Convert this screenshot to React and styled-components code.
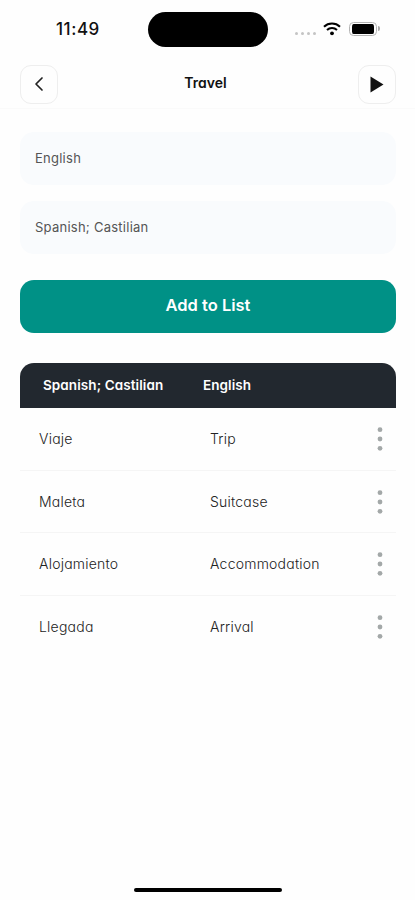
import React from "react";
import styled, { createGlobalStyle } from "styled-components";

const words = [
  { id: 1, source: "Viaje", target: "Trip" },
  { id: 2, source: "Maleta", target: "Suitcase" },
  { id: 3, source: "Alojamiento", target: "Accommodation" },
  { id: 4, source: "Llegada", target: "Arrival" },
];

const App = () => {
  return (
    <>
      <GlobalStyle />
      <Screen>
        <StatusBar>
          <Clock>11:49</Clock>
          <Island />
          <StatusIcons>
            <SignalDots>
              <i />
              <i />
              <i />
              <i />
            </SignalDots>
            <svg width="18" height="14" viewBox="0 0 18 14" fill="none" stroke="#000">
              <path d="M1 4.7C5.5 0.5 12.5 0.5 17 4.7" strokeWidth="2.1" />
              <path d="M4 8C6.8 5.3 11.2 5.3 14 8" strokeWidth="2" />
              <circle cx="9" cy="11.3" r="1.9" fill="#000" stroke="none" />
            </svg>
            <Battery>
              <BatteryBody />
              <BatteryCap />
            </Battery>
          </StatusIcons>
        </StatusBar>

        <Header>
          <IconButton aria-label="Back">
            <svg width="10" height="16" viewBox="0 0 10 16" fill="none">
              <path
                d="M8 2L2 8L8 14"
                stroke="#222"
                strokeWidth="1.7"
                strokeLinecap="round"
                strokeLinejoin="round"
              />
            </svg>
          </IconButton>
          <Title>Travel</Title>
          <IconButton aria-label="Play">
            <svg width="14" height="17" viewBox="0 0 14 17">
              <path d="M0.5 0.5L13.5 8.5L0.5 16.5Z" fill="#111" />
            </svg>
          </IconButton>
        </Header>

        <Form>
          <Field>English</Field>
          <Field>Spanish; Castilian</Field>
          <AddButton>Add to List</AddButton>
        </Form>

        <Table>
          <TableHead>
            <span>Spanish; Castilian</span>
            <span>English</span>
          </TableHead>
          {words.map((word) => (
            <Row key={word.id}>
              <Word>{word.source}</Word>
              <Word>{word.target}</Word>
              <MoreButton aria-label="More">
                <svg width="6" height="24" viewBox="0 0 6 24" fill="#a3a8a8">
                  <circle cx="3" cy="2.7" r="2.4" />
                  <circle cx="3" cy="12" r="2.4" />
                  <circle cx="3" cy="21.3" r="2.4" />
                </svg>
              </MoreButton>
            </Row>
          ))}
        </Table>

        <HomeIndicator />
      </Screen>
    </>
  );
};

export default App;

const GlobalStyle = createGlobalStyle`
  * {
    box-sizing: border-box;
  }
  body {
    margin: 0;
    background: #fefefe;
    font-family: "Inter", "Liberation Sans", sans-serif;
    font-feature-settings: "cv11";
  }
  button {
    font: inherit;
    font-feature-settings: inherit;
    padding: 0;
    border: none;
    background: none;
  }
`;

const Screen = styled.div`
  display: flex;
  flex-direction: column;
  width: 415px;
  height: 900px;
  overflow: hidden;
  background: #fefefe;
`;

const StatusBar = styled.div`
  display: grid;
  grid-template-columns: 148px 120px 1fr;
  align-items: center;
  height: 58px;
`;

const Clock = styled.div`
  padding-left: 56px;
  font-size: 17px;
  font-weight: 500;
  letter-spacing: 0.55px;
  color: #111;
`;

const Island = styled.div`
  height: 35px;
  border-radius: 18px;
  background: #000;
`;

const StatusIcons = styled.div`
  display: flex;
  align-items: center;
  padding: 0 0 1px 27px;
`;

const SignalDots = styled.div`
  display: flex;
  gap: 3px;
  margin: 9px 7px 0 0;
  i {
    width: 3px;
    height: 3px;
    border-radius: 50%;
    background: #c4c4c4;
  }
`;

const Battery = styled.div`
  display: flex;
  align-items: center;
  gap: 1px;
  margin-left: 8px;
`;

const BatteryBody = styled.div`
  width: 28px;
  height: 14px;
  padding: 1px 2px;
  border: 1px solid #b4b4b4;
  border-radius: 4.5px;
  background: #000 content-box;
`;

const BatteryCap = styled.div`
  width: 1.5px;
  height: 5px;
  border-radius: 0 2px 2px 0;
  background: #aaa;
`;

const Header = styled.header`
  display: flex;
  align-items: center;
  justify-content: space-between;
  height: 51px;
  padding: 2px 19px 0 20px;
  border-bottom: 1px solid #fafafa;
`;

const IconButton = styled.button`
  display: flex;
  align-items: center;
  justify-content: center;
  width: 38px;
  height: 39px;
  border: 1px solid #eee;
  border-radius: 11px;
`;

const Title = styled.h1`
  margin: 0 5px 3px 0;
  font-size: 14px;
  font-weight: 600;
  color: #111;
`;

const Form = styled.div`
  display: flex;
  flex-direction: column;
  gap: 16px;
  padding: 23px 19px 0 20px;
`;

const Field = styled.div`
  display: flex;
  align-items: center;
  height: 53px;
  padding: 0 15px 2px;
  border-radius: 14px;
  background: #f9fbfd;
  font-size: 13px;
  letter-spacing: 0.25px;
  color: #555;
  font-feature-settings: normal;
`;

const AddButton = styled.button`
  height: 53px;
  margin-top: 10px;
  padding-bottom: 3px;
  border-radius: 14px;
  background: #009186;
  font-size: 16.5px;
  font-weight: 600;
  color: #fff;
`;

const Table = styled.div`
  margin: 30px 19px 0 20px;
`;

const TableHead = styled.div`
  display: grid;
  grid-template-columns: 160px 1fr;
  align-items: center;
  height: 45px;
  padding: 0 0 2px 23px;
  border-radius: 14px 14px 0 0;
  background: #22282f;
  font-size: 13.5px;
  font-weight: 600;
  letter-spacing: 0.08px;
  color: #fff;
`;

const Row = styled.div`
  display: grid;
  grid-template-columns: 171px 1fr 14px;
  align-items: center;
  height: 62.7px;
  padding: 0 9px 0 19px;
  border-bottom: 1px solid #f5f5f5;
  &:last-child {
    border-bottom: none;
  }
`;

const Word = styled.span`
  padding-bottom: 1px;
  font-size: 14px;
  font-weight: 300;
  letter-spacing: 0.22px;
  color: #222;
`;

const MoreButton = styled.button`
  display: flex;
  justify-content: center;
`;

const HomeIndicator = styled.div`
  width: 148px;
  height: 4px;
  margin: auto auto 8px 134px;
  border-radius: 2px;
  background: #000;
`;
